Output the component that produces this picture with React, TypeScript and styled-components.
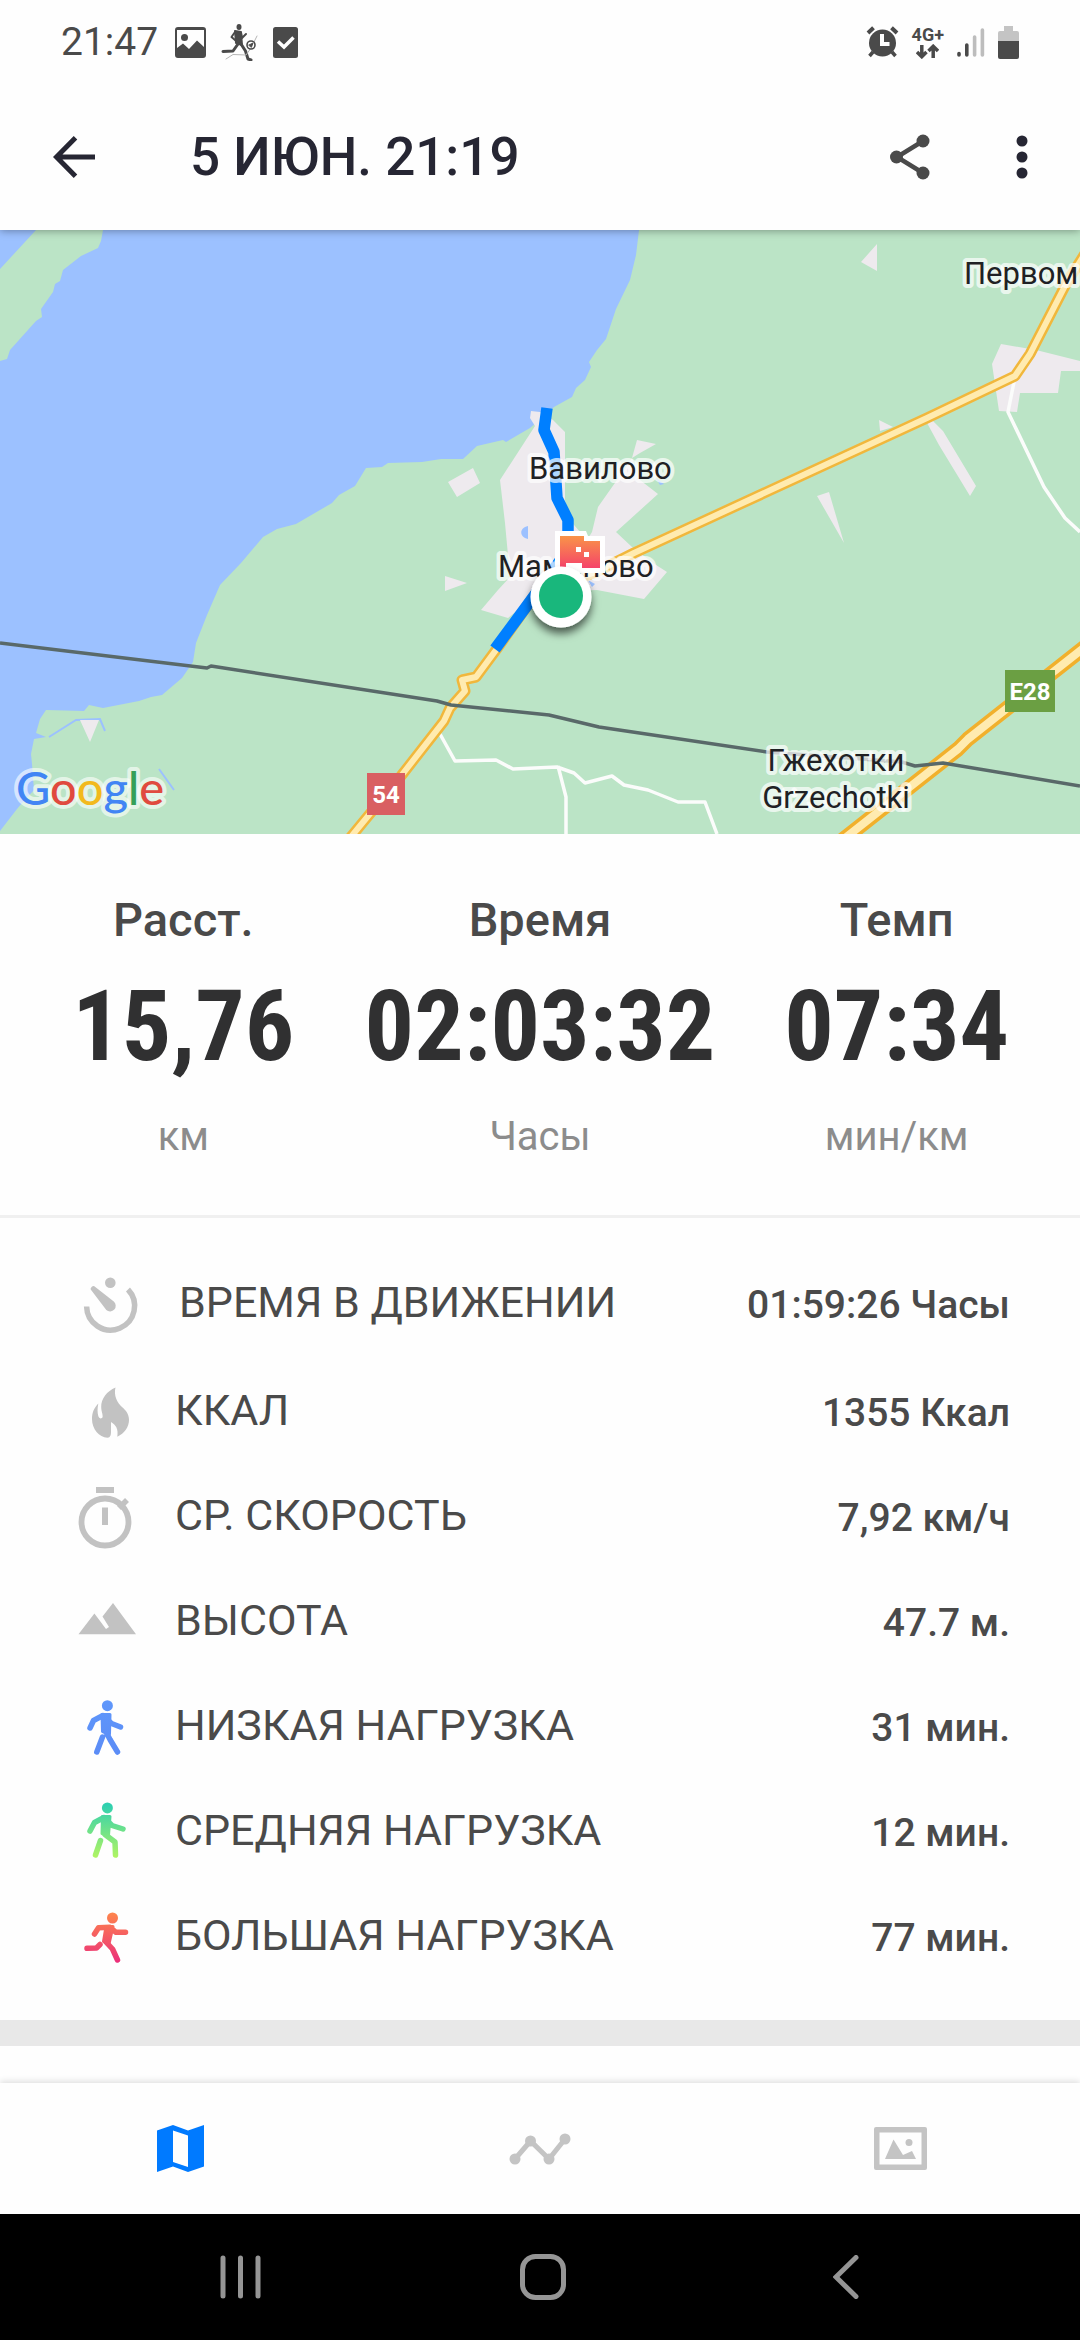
import React from "react";
import styled, { createGlobalStyle } from "styled-components";

const GlobalStyle = createGlobalStyle`
  *, *::before, *::after { box-sizing: border-box; }
  body { margin: 0; background: #fefefe; font-family: Roboto, "Noto Sans", sans-serif; color: #4a4a4a; }
  button { border: 0; padding: 0; background: none; color: inherit; font: inherit; cursor: pointer; }
  svg { display: block; }
  dl, dt, dd, h1, p { margin: 0; }
`;

const Screen = styled.div`
  display: flex;
  flex-direction: column;
  min-height: 100vh;
`;

/* ---------- top: status bar and app bar ---------- */

const TopArea = styled.header`
  position: relative;
  z-index: 1;
  background: #fefefe;
  box-shadow: 0 1px 8px rgba(0, 0, 0, 0.35);
`;

const StatusBar = styled.div`
  display: flex;
  align-items: center;
  justify-content: space-between;
  height: 84px;
  padding: 0 61px;
`;

const StatusGroup = styled.div<{ $gap: number }>`
  display: flex;
  align-items: center;
  gap: ${(p) => p.$gap}px;
`;

const Clock = styled.span`
  font-size: 39px;
  line-height: 46px;
  margin-right: 2px;
`;

const Network = styled.div`
  display: flex;
  flex-direction: column;
  align-items: center;
  font-size: 18px;
  font-weight: 700;
  line-height: 18px;
`;

const AppBar = styled.div`
  display: flex;
  align-items: center;
  height: 146px;
  padding-left: 44px;
  color: #262633;
`;

const IconButton = styled.button<{ $width: number; $tone?: string }>`
  display: flex;
  align-items: center;
  justify-content: center;
  width: ${(p) => p.$width}px;
  height: 72px;
  color: ${(p) => p.$tone ?? "inherit"};
`;

const Title = styled.h1`
  flex: 1;
  padding-left: 86px;
  font-size: 53px;
  line-height: 62px;
  font-weight: 500;
`;

/* ---------- map ---------- */

const MapPanel = styled.section`
  line-height: 0;

  svg {
    width: 100%;
    height: auto;
  }
`;

const PlaceName = styled.text`
  font-family: Roboto, sans-serif;
  font-size: 31px;
  fill: #1f2124;
  stroke: rgba(255, 255, 255, 0.7);
  stroke-width: 8px;
  stroke-linejoin: round;
  paint-order: stroke;
`;

const RoadNumber = styled.text`
  font-family: Roboto, sans-serif;
  font-size: 24px;
  font-weight: 700;
  fill: #fff;
`;

const MapBrand = styled.text`
  font-family: Lato, sans-serif;
  font-size: 47px;
  font-weight: 500;
  stroke: rgba(255, 255, 255, 0.6);
  stroke-width: 8px;
  stroke-linejoin: round;
  paint-order: stroke;
`;

/* ---------- headline metrics ---------- */

const Metrics = styled.dl`
  display: grid;
  grid-template-columns: repeat(3, minmax(0, 1fr));
  padding: 59px 5px 53px;
  border-bottom: 3px solid #f0f0f0;
  text-align: center;
`;

const Metric = styled.div`
  display: flex;
  flex-direction: column;
`;

const MetricName = styled.dt`
  font-size: 47px;
  line-height: 54px;
  font-weight: 500;
`;

const MetricValue = styled.dd`
  font-family: "Roboto Condensed", "Liberation Sans Narrow", Roboto, sans-serif;
  font-size: 98px;
  line-height: 160px;
  font-weight: 700;
  color: #303031;
  white-space: nowrap;
`;

const MetricUnit = styled.dd`
  padding-top: 4px;
  font-size: 40px;
  line-height: 51px;
  color: #8c8c8c;
`;

/* ---------- detail list ---------- */

const Details = styled.dl`
  padding: 34px 70px 30px 77px;
`;

const DetailRow = styled.div<{ $lead?: boolean }>`
  display: flex;
  align-items: center;
  height: 105px;
  margin-bottom: ${(p) => (p.$lead ? 3 : 0)}px;
`;

const DetailText = styled.div<{ $lead?: boolean }>`
  flex: 1;
  display: flex;
  align-items: center;
  justify-content: space-between;
  padding-left: ${(p) => (p.$lead ? 38 : 34)}px;
`;

const DetailName = styled.dt`
  padding-bottom: 6px;
  font-size: 43px;
  line-height: 50px;
`;

const DetailValue = styled.dd`
  font-size: 39px;
  line-height: 50px;
  font-weight: 500;
`;

const SectionBreak = styled.div`
  height: 26px;
  background: #e8e8e8;
`;

const NextSection = styled.div`
  flex: 1;
  min-height: 37px;
`;

/* ---------- bottom bars ---------- */

const TabBar = styled.nav`
  display: grid;
  grid-template-columns: repeat(3, 1fr);
  height: 131px;
  background: #fefefe;
  box-shadow: 0 -2px 6px rgba(0, 0, 0, 0.12);
`;

const Tab = styled.button<{ $active?: boolean }>`
  display: flex;
  align-items: center;
  justify-content: center;
  color: ${(p) => (p.$active ? "#007aff" : "#c4c4c4")};
`;

const SystemBar = styled.nav`
  display: grid;
  grid-template-columns: repeat(3, 1fr);
  height: 126px;
  padding: 0 83px 0 89px;
  background: #000;
  color: #959595;
`;

const SystemButton = styled.button`
  display: flex;
  align-items: center;
  justify-content: center;
`;

/* ---------- icons ---------- */

const StatusIcons = () => (
  <>
    <svg width="31" height="31" viewBox="0 0 31 31" fill="#4a4a4a">
      <path fillRule="evenodd" d="M3 0H28A3 3 0 0 1 31 3V28A3 3 0 0 1 28 31H3A3 3 0 0 1 0 28V3A3 3 0 0 1 3 0ZM2 3V21L8 16.500L14 22L22 13.500L29 20V3Z" />
      <circle cx="9.500" cy="10.500" r="3.500" />
    </svg>
    <svg width="37" height="37" viewBox="0 0 37 37" fill="none" stroke="#4a4a4a" strokeLinecap="round" strokeLinejoin="round">
      <ellipse cx="18" cy="3" rx="2.500" ry="3" fill="#4a4a4a" stroke="none" />
      <path d="M14 7L20 8L21 21L15 19Z" fill="#4a4a4a" strokeWidth="2" />
      <path d="M14 8L10.500 13L14 16M20 9L21 14L25 10" strokeWidth="2" />
      <path d="M17 20L12 27L2 27.500M20 20L24.500 27L27 35L30 36" strokeWidth="3" />
      <path d="M36 12L30 24L25 31L12 30.500L5 35" stroke="#b5b5b5" strokeWidth="1" />
      <circle cx="30" cy="21" r="4" fill="#fff" strokeWidth="1.600" />
      <path d="M28 21L32 19L30.500 23Z" fill="#4a4a4a" strokeWidth="1" />
    </svg>
    <svg width="25" height="31" viewBox="0 0 25 31">
      <rect width="25" height="31" rx="2.500" fill="#4a4a4a" />
      <path d="M5 14.500L11 20L20.500 10.500" fill="none" stroke="#fff" strokeWidth="3.500" />
    </svg>
  </>
);

const AlarmIcon = () => (
  <svg width="33" height="32" viewBox="0 0 33 32" stroke="#4a4a4a">
    <circle cx="16.500" cy="17" r="13.500" fill="#4a4a4a" stroke="none" />
    <path d="M2 7L7.500 1.800M25.500 1.800L31 7" strokeWidth="4" />
    <path d="M7 26L3.500 30M26 26L29.500 30" strokeWidth="3.500" />
    <path d="M16 8V18H23.500" fill="none" stroke="#fff" strokeWidth="4" />
  </svg>
);

const DataArrows = () => (
  <svg width="23" height="15" viewBox="0 0 23 15" fill="none" stroke="#4a4a4a" strokeWidth="3.500">
    <path d="M5.800 1V12M1 8L5.800 12.700L10.500 8M17.200 14V3M12.500 7L17.200 2.300L22 7" />
  </svg>
);

const SignalIcon = () => (
  <svg width="28" height="31" viewBox="0 0 28 31" strokeWidth="3.600" strokeLinecap="round">
    <path d="M2 26.500V28M9.800 18V28" stroke="#4a4a4a" />
    <path d="M17.600 10V28M25.400 3V28" stroke="#bdbdbd" />
  </svg>
);

const BatteryIcon = () => (
  <svg width="21" height="33" viewBox="0 0 21 33">
    <path d="M6 0H15V5H19A2 2 0 0 1 21 7V16H0V7A2 2 0 0 1 2 5H6Z" fill="#c4c4c4" />
    <path d="M0 15H21V31A2 2 0 0 1 19 33H2A2 2 0 0 1 0 31Z" fill="#4a4a4a" />
  </svg>
);

const BackArrow = () => (
  <svg width="42" height="42" viewBox="0 0 42 42" fill="none" stroke="currentColor" strokeWidth="5">
    <path d="M42 21H4M22.500 1.800L3.500 21L22.500 40.200" />
  </svg>
);

const ShareIcon = () => (
  <svg width="40" height="46" viewBox="0 0 40 46" fill="currentColor">
    <path d="M33 7L7 23L33 39" fill="none" stroke="currentColor" strokeWidth="4.500" />
    <circle cx="33" cy="7" r="6.500" />
    <circle cx="6.500" cy="23" r="6.500" />
    <circle cx="33" cy="39" r="6.500" />
  </svg>
);

const MoreIcon = () => (
  <svg width="12" height="44" viewBox="0 0 12 44" fill="currentColor">
    <circle cx="6" cy="6" r="5.500" />
    <circle cx="6" cy="22" r="5.500" />
    <circle cx="6" cy="38" r="5.500" />
  </svg>
);

const DetailIcon = ({ children }: { children: React.ReactNode }) => (
  <svg width="64" height="64" viewBox="0 0 64 64" fill="#c2c2c2">
    {children}
  </svg>
);

const MovingTimeIcon = () => (
  <DetailIcon>
    <path d="M51 16.500A24 24 0 1 1 9.600 33.500" fill="none" stroke="#c2c2c2" strokeWidth="5.500" />
    <circle cx="33.300" cy="9.700" r="5.300" />
    <path d="M14.500 17.600A2.600 2.600 0 0 1 18.300 14L36.800 28.500A5.500 5.500 0 0 1 29.300 37Z" />
  </DetailIcon>
);

const FlameIcon = () => (
  <DetailIcon>
    <path d="M38.500 6.500C30 10 24 18 24.200 26C24.300 31 26 33 25.600 36C24.500 38.500 22 37.500 21.300 35C20.300 31.500 20.300 28 21.300 22.500C17 27 15 31.500 15 38C15 48 22 56.500 30.500 56.700C33.500 56.500 34 54 34 50.500V41C39 44 41.500 48 40.300 55.700C47.500 52.500 52 46 52 39C52 33 49 29.500 45 26C40 22 36.500 14 38.500 6.500Z" />
  </DetailIcon>
);

const StopwatchIcon = () => (
  <DetailIcon>
    <path d="M19 1H37V7H19ZM25 21.500H31V39H25Z" />
    <circle cx="28" cy="36" r="23.500" fill="none" stroke="#c2c2c2" strokeWidth="5.800" />
    <path d="M42 22L50 14" stroke="#c2c2c2" strokeWidth="5.500" />
  </DetailIcon>
);

const MountainIcon = () => (
  <DetailIcon>
    <path d="M1.500 43.300L17.400 22.500L29 38L32 36L25.500 25.500L36 12L59 43.300Z" />
  </DetailIcon>
);

const figures = {
  walk: {
    colors: ["#5f97fb", "#5b8cf6"],
    head: [30.4, 9.7],
    limbs: "M13 32L16.500 24.500L26 19.500L34.500 27.500L43.500 31M25.500 41L19.800 56M29 36L33 43.500L40.500 56",
    torso: "M25 18.500L33 18.500L32.500 38L25.500 35.500Z",
  },
  brisk: {
    colors: ["#2fd0b0", "#b4f560"],
    head: [30.4, 6.9],
    limbs: "M13 30L17.500 21.500L27 16.500L35 24.500L46 28M23.500 39.500L18.500 54M28 33.500L38 41L38.500 54",
    torso: "M25.500 15.500L33 15.500L31.500 34.500L25 32.500Z",
  },
  run: {
    colors: ["#ff8a4a", "#ea2c7c"],
    head: [35.5, 12],
    limbs: "M17.500 28L21.500 21.800L33 21.300L39 26.300L48.500 26.300M23 38.500L19.500 42L10 42.300M29 36L35.500 43L40.500 54",
    torso: "M29 20.500L36 20.500L32 38L26.500 35.500Z",
  },
};

const FigureIcon = ({ kind }: { kind: keyof typeof figures }) => {
  const figure = figures[kind];
  const paint = `url(#figure-${kind})`;
  return (
    <DetailIcon>
      <defs>
        <linearGradient id={`figure-${kind}`} gradientUnits="userSpaceOnUse" x1="0" y1="4" x2="0" y2="58">
          <stop offset="0" stopColor={figure.colors[0]} />
          <stop offset="1" stopColor={figure.colors[1]} />
        </linearGradient>
      </defs>
      <circle cx={figure.head[0]} cy={figure.head[1]} r="5.500" fill={paint} />
      <path d={figure.limbs} fill="none" stroke={paint} strokeWidth="5.500" strokeLinecap="round" strokeLinejoin="round" />
      <path d={figure.torso} fill={paint} stroke={paint} strokeWidth="3" strokeLinejoin="round" />
    </DetailIcon>
  );
};

/* ---------- map drawing ---------- */

const ROAD_54 = "M350 608L401 546L444 491L450 478L465 461L462 450L476 447L496 420L537 362L596 342L634 323L927 188L1015 146L1030 124L1066 54L1086 22";
const ROAD_E28 = "M840 612L958 519L968 509L1090 413";

const RouteMap = () => (
  <svg viewBox="0 0 1080 604" role="img" aria-label="Карта маршрута">
    <defs>
      <linearGradient id="flag" x1="0" y1="0" x2="0" y2="1">
        <stop offset="0" stopColor="#f99448" />
        <stop offset="1" stopColor="#f5436a" />
      </linearGradient>
      <filter id="pin-shadow" x="-50%" y="-50%" width="200%" height="200%">
        <feDropShadow dx="0" dy="6" stdDeviation="4" floodColor="#000" floodOpacity="0.6" />
      </filter>
    </defs>
    <rect width="1080" height="604" fill="#9cc1ff" />
    <g fill="#bbe4c6">
      <path d="M36 0H103L101 11L98 18L81 26L63 40L60 51L55 54L53 62L41 79L42 87L36 91L10 120L7 129L0 131V39Z" />
      <path d="M639 0L636 25L630 50L616 79L606 109L597 120L589 132L591 137L585 150L576 158L572 167L554 177L530 198L506 212L503 210L477 216L463 229L441 229L422 232L388 233L382 237L366 238L355 256L339 265L332 273L296 294L277 299L263 307L241 333L220 355L207 385L196 413L193 432L182 448L162 465L151 467L139 471L103 478L89 475L84 481L46 480L40 489L36 503L46 507L34 509L31 524L32 534L34 560L22 573L17 579L0 601V604H1080V0Z" />
    </g>
    <path d="M49 507L76 490L100 489L105 501M159 539L174 560" fill="none" stroke="#9cc1ff" strokeWidth="2" />
    <g fill="#eeeaee">
      <path d="M531 181L530 188L535 196L500 250L505 293L510 347L498 360L481 380L508 388L540 362L597 360L644 369L667 342L653 333L632 317L616 302L658 264L640 250L632 228L617 250L598 277L592 302L587 310L568 288L565 270V202L553 190L540 182Z" />
      <path d="M637 210L656 214L640 223L632 228Z" />
      <path d="M448 252L473 238L480 253L457 267ZM445 346L467 353L445 361ZM80 490H99L90 512ZM861 32L877 14V41ZM879 190L893 197L880 201ZM926 191H933L943 201L976 256L970 266L939 215ZM817 266L829 262L844 313Z" />
      <path d="M1001 114L1036 120L1080 131V141H1061L1058 163H1020L1017 182L999 181L992 134Z" />
    </g>
    <path d="M528 296C519 298 519 307 528 309ZM588 350L595 354L592 357ZM656 248L664 254L660 255Z" fill="#9cc1ff" />
    <g fill="none" stroke="#fbfcfb" strokeWidth="3.500" strokeLinejoin="round">
      <path d="M440 504L455 531L496 530L513 539L557 537L574 543L585 553L612 546L624 555L648 560L678 572H705L717 604M558 536L566 567V604" />
      <path d="M1014 152L1008 182L1044 257L1065 288L1080 302" />
    </g>
    <g fill="none" strokeLinejoin="round">
      <path d={ROAD_54} stroke="#f1b73c" strokeWidth="11" />
      <path d={ROAD_E28} stroke="#f1b02c" strokeWidth="15" />
      <path d={ROAD_54} stroke="#ffebb0" strokeWidth="6" />
      <path d={ROAD_E28} stroke="#ffebb0" strokeWidth="8" />
      <path d="M0 413L207 438L211 436L437 471L451 475L549 485L599 497L767 522L902 532L915 536L943 533L1080 556" stroke="#596969" strokeWidth="3.500" />
      <path d="M547 178L544 200L554 222L557 268L568 290V320L537 362L495 419" stroke="#007fff" strokeWidth="11.500" />
    </g>
    <PlaceName x="529" y="249">Вавилово</PlaceName>
    <PlaceName x="498" y="347">Мамоново</PlaceName>
    <PlaceName x="964" y="54">Первом</PlaceName>
    <PlaceName x="836" y="541" textAnchor="middle">Гжехотки</PlaceName>
    <PlaceName x="836" y="578" textAnchor="middle">Grzechotki</PlaceName>
    <rect x="367" y="543" width="38" height="42" fill="#d95f62" />
    <RoadNumber x="386" y="573" textAnchor="middle">54</RoadNumber>
    <rect x="1005" y="440" width="50" height="42" fill="#6b9f43" />
    <RoadNumber x="1030" y="470" textAnchor="middle">E28</RoadNumber>
    <MapBrand x="16" y="575">
      <tspan fill="#4285f4">G</tspan>
      <tspan fill="#e04a3f">o</tspan>
      <tspan fill="#f2b91d">o</tspan>
      <tspan fill="#4285f4">g</tspan>
      <tspan fill="#34a058">l</tspan>
      <tspan fill="#e04a3f">e</tspan>
    </MapBrand>
    <path d="M555 301H586L588 306H605V343H575L570 339L566 343H555Z" fill="#fff" />
    <path d="M560 306H584V311H600V338H582V333H566V338H560Z" fill="url(#flag)" />
    <path d="M576 317H581V322H576ZM584 322H589V327H584Z" fill="#fff" />
    <circle cx="561" cy="367" r="30.500" fill="#fff" filter="url(#pin-shadow)" />
    <circle cx="561" cy="366" r="22" fill="#19b77c" />
  </svg>
);

/* ---------- data ---------- */

const metrics = [
  { name: "Расст.", value: "15,76", unit: "км" },
  { name: "Время", value: "02:03:32", unit: "Часы" },
  { name: "Темп", value: "07:34", unit: "мин/км" },
];

const details = [
  { icon: <MovingTimeIcon />, name: "ВРЕМЯ В ДВИЖЕНИИ", value: "01:59:26 Часы", lead: true },
  { icon: <FlameIcon />, name: "ККАЛ", value: "1355 Ккал" },
  { icon: <StopwatchIcon />, name: "СР. СКОРОСТЬ", value: "7,92 км/ч" },
  { icon: <MountainIcon />, name: "ВЫСОТА", value: "47.7 м." },
  { icon: <FigureIcon kind="walk" />, name: "НИЗКАЯ НАГРУЗКА", value: "31 мин." },
  { icon: <FigureIcon kind="brisk" />, name: "СРЕДНЯЯ НАГРУЗКА", value: "12 мин." },
  { icon: <FigureIcon kind="run" />, name: "БОЛЬШАЯ НАГРУЗКА", value: "77 мин." },
];

export default function App() {
  return (
    <Screen>
      <GlobalStyle />
      <TopArea>
        <StatusBar>
          <StatusGroup $gap={15}>
            <Clock>21:47</Clock>
            <StatusIcons />
          </StatusGroup>
          <StatusGroup $gap={13}>
            <AlarmIcon />
            <Network>
              <span>4G+</span>
              <DataArrows />
            </Network>
            <SignalIcon />
            <BatteryIcon />
          </StatusGroup>
        </StatusBar>
        <AppBar>
          <IconButton $width={60} aria-label="Назад">
            <BackArrow />
          </IconButton>
          <Title>5 ИЮН. 21:19</Title>
          <IconButton $width={108} $tone="#4a4a4a" aria-label="Поделиться">
            <ShareIcon />
          </IconButton>
          <IconButton $width={116} aria-label="Ещё">
            <MoreIcon />
          </IconButton>
        </AppBar>
      </TopArea>
      <MapPanel>
        <RouteMap />
      </MapPanel>
      <Metrics>
        {metrics.map((m) => (
          <Metric key={m.name}>
            <MetricName>{m.name}</MetricName>
            <MetricValue>{m.value}</MetricValue>
            <MetricUnit>{m.unit}</MetricUnit>
          </Metric>
        ))}
      </Metrics>
      <Details>
        {details.map((d) => (
          <DetailRow key={d.name} $lead={d.lead}>
            {d.icon}
            <DetailText $lead={d.lead}>
              <DetailName>{d.name}</DetailName>
              <DetailValue>{d.value}</DetailValue>
            </DetailText>
          </DetailRow>
        ))}
      </Details>
      <SectionBreak />
      <NextSection />
      <TabBar>
        <Tab $active aria-label="Карта">
          <svg width="47" height="47" viewBox="0 0 47 47" fill="currentColor">
            <path fillRule="evenodd" d="M0 5.500L16 0L31 5.500L47 0V41.500L31 47L16 41.500L0 47ZM16 5.500V37L31 42V10.500Z" />
          </svg>
        </Tab>
        <Tab aria-label="Графики">
          <svg width="62" height="32" viewBox="0 0 62 32" fill="currentColor">
            <path d="M6 26L21.500 8L40 26L56 6" fill="none" stroke="currentColor" strokeWidth="5" />
            <circle cx="6" cy="26" r="5.500" />
            <circle cx="21.500" cy="8" r="5.500" />
            <circle cx="40" cy="26" r="5.500" />
            <circle cx="56" cy="6" r="5.500" />
          </svg>
        </Tab>
        <Tab aria-label="Фото">
          <svg width="53" height="43" viewBox="0 0 53 43" fill="currentColor">
            <path fillRule="evenodd" d="M2 0H51A2 2 0 0 1 53 2V41A2 2 0 0 1 51 43H2A2 2 0 0 1 0 41V2A2 2 0 0 1 2 0ZM5.500 5.500V37.500H47.500V5.500Z" />
            <path d="M11 32L19.500 12.500L29 28L38 24L42 32Z" />
            <circle cx="35" cy="15.500" r="3.500" />
          </svg>
        </Tab>
      </TabBar>
      <SystemBar>
        <SystemButton aria-label="Недавние">
          <svg width="41" height="44" viewBox="0 0 41 44" stroke="currentColor" strokeWidth="5" strokeLinecap="round">
            <path d="M3 3V41M20.500 3V41M38 3V41" />
          </svg>
        </SystemButton>
        <SystemButton aria-label="Домой">
          <svg width="46" height="46" viewBox="0 0 46 46" fill="none" stroke="currentColor" strokeWidth="5">
            <rect x="2.500" y="2.500" width="41" height="41" rx="13" />
          </svg>
        </SystemButton>
        <SystemButton aria-label="Назад">
          <svg width="26" height="44" viewBox="0 0 26 44" fill="none" stroke="currentColor" strokeWidth="5" strokeLinecap="round">
            <path d="M23 2.500L3 22L23 41.500" />
          </svg>
        </SystemButton>
      </SystemBar>
    </Screen>
  );
}
